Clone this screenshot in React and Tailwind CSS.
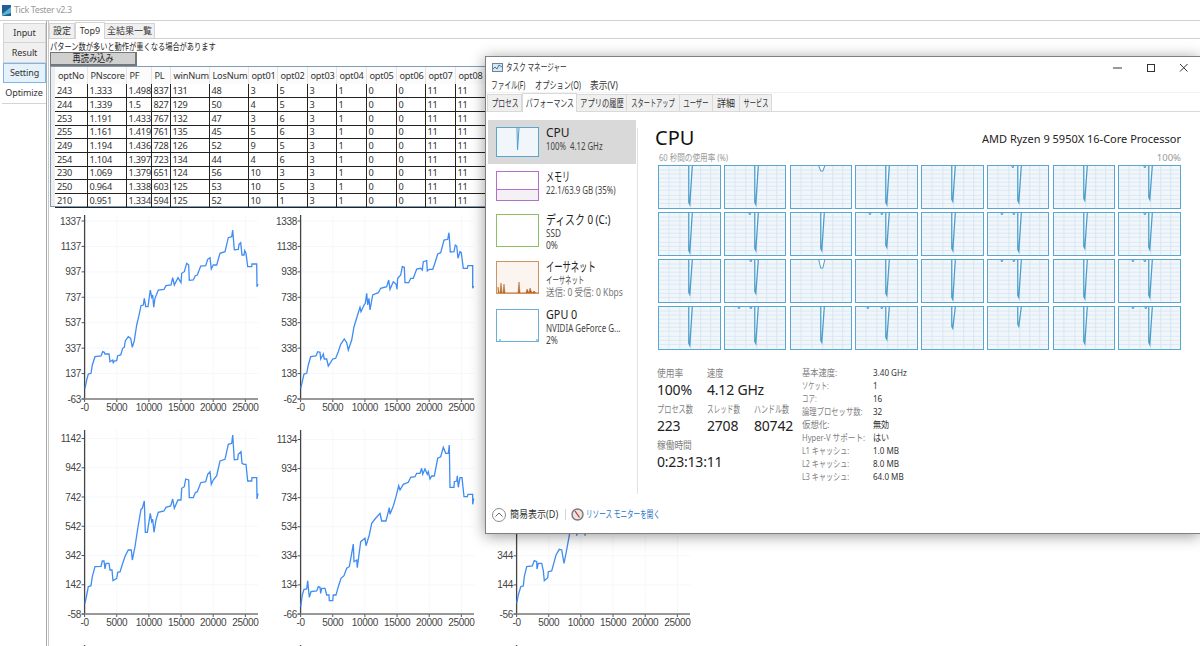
import React from 'react';

const tableHead = ['optNo', 'PNscore', 'PF', 'PL', 'winNum', 'LosNum', 'opt01', 'opt02', 'opt03', 'opt04', 'opt05', 'opt06', 'opt07', 'opt08'];
const tableRows = [
  [243, '1.333', '1.498', 837, 131, 48, 3, 5],
  [244, '1.339', '1.5', 827, 129, 50, 4, 5],
  [253, '1.191', '1.433', 767, 132, 47, 3, 6],
  [255, '1.161', '1.419', 761, 135, 45, 5, 6],
  [249, '1.194', '1.436', 728, 126, 52, 9, 5],
  [254, '1.104', '1.397', 723, 134, 44, 4, 6],
  [230, '1.069', '1.379', 651, 124, 56, 10, 3],
  [250, '0.964', '1.338', 603, 125, 53, 10, 5],
  [210, '0.951', '1.334', 594, 125, 52, 10, 1],
];

// 折れ線の座標は 3 倍の値で持っておいて描画時に割る
const line1 = [135,535,140,510,145,492,153,490,157,465,165,440,183,438,188,425,193,427,195,432,207,432,210,455,218,450,220,460,222,453,230,452,233,437,242,435,248,415,253,412,256,393,265,380,272,385,277,412,283,392,290,345,296,320,303,287,310,285,313,265,317,290,324,290,331,240,335,262,338,255,341,292,345,265,355,240,372,238,378,227,393,225,398,203,403,225,414,203,423,218,425,190,433,185,440,160,446,165,448,211,460,210,466,197,472,195,482,168,497,167,503,148,510,143,514,177,520,165,530,165,540,130,555,125,565,83,575,80,578,60,583,119,595,118,597,103,602,98,606,135,612,135,614,122,618,130,623,170,635,170,636,162,650,162,651,230,654,222];
const line2 = [92,535,97,515,102,492,110,490,115,465,122,440,138,438,143,425,150,427,152,447,160,432,163,447,170,447,175,468,180,460,188,447,197,445,205,425,212,403,223,387,230,398,235,420,245,390,252,350,262,318,270,292,273,305,282,285,286,280,290,250,293,285,297,265,300,300,308,255,325,248,332,235,350,230,356,210,360,238,370,215,378,222,381,238,383,205,392,195,397,170,403,172,405,218,416,218,422,205,430,205,440,177,452,175,457,180,460,155,470,152,472,183,478,178,488,178,493,165,503,132,512,128,522,90,533,88,537,68,541,126,552,125,556,105,560,108,564,145,570,125,574,128,580,175,592,175,594,167,608,167,608,235,611,228];
const line3 = [135,535,140,510,145,485,153,482,157,455,165,425,183,424,187,408,192,408,195,432,198,415,207,415,210,435,216,435,219,467,230,460,233,442,240,441,248,415,256,392,265,375,274,375,277,405,285,365,295,300,303,253,307,250,313,228,316,322,322,322,331,265,335,290,338,283,342,322,348,285,355,262,372,258,378,247,392,243,398,222,403,250,414,225,423,225,425,190,433,185,437,162,446,165,448,218,460,218,466,203,472,200,482,173,497,170,503,148,510,140,514,178,520,165,530,152,540,108,555,103,565,58,575,55,578,30,583,104,593,103,595,88,603,80,606,115,612,118,618,118,623,168,635,168,636,158,650,158,651,222,654,205];
const line4 = [92,545,97,510,102,493,110,492,113,467,118,517,123,500,140,498,145,485,150,487,152,505,155,490,165,490,170,510,177,510,178,527,188,527,190,510,198,510,205,485,213,460,222,452,230,430,238,425,245,385,250,357,252,410,260,405,262,428,272,350,285,340,288,362,298,330,305,295,315,282,330,265,335,288,348,288,358,248,360,268,370,243,378,215,386,182,390,195,400,178,415,172,422,157,435,155,440,145,450,145,455,130,458,148,465,132,472,148,475,140,480,162,485,153,493,153,503,100,512,95,520,67,527,85,535,85,538,60,540,187,552,187,553,170,560,168,562,152,565,187,570,158,576,158,582,215,592,215,594,208,608,208,608,238,611,220];
const line5 = [740,535,745,510,752,485,760,483,763,455,770,425,787,423,793,407,800,410,801,432,805,415,815,415,820,437,823,467,833,458,835,440,845,438,858,390,868,373,875,375,882,415,888,385,900,320,905,290,920,290,920,332,925,290,945,290,945,332,950,290];

const toPoints = (raw, dx) => {
  const out = [];
  for (let i = 0; i < raw.length; i += 2) {
    out.push(`${(raw[i] / 3 + dx).toFixed(1)},${(raw[i + 1] / 3).toFixed(1)}`);
  }
  return out.join(' ');
};

const AXIS_X = 44.6;
const X_STEP = 32.15;

// 元画面のかなは幅が狭いので横方向だけ縮める
const K = ({ s = 'scale-x-[0.8]', center, children }) => (
  <span className={`inline-block whitespace-nowrap ${center ? 'origin-center' : 'origin-left'} ${s}`}>{children}</span>
);

const Chart = ({ labels = [], top = 11, bottom = 189, axisTop = 5, points }) => {
  const stepY = labels.length > 1 ? (bottom - top) / (labels.length - 1) : 0;
  const xTicks = ['-0', '5000', '10000', '15000', '20000', '25000'];
  return (
    <svg width="216" height="215" className="overflow-visible font-['Liberation_Sans',sans-serif] text-[10px]">
      {labels.map((t, i) => {
        const y = top + stepY * i;
        return (
          <g key={t}>
            {i < labels.length - 1 && <line x1={AXIS_X} x2="218" y1={y} y2={y} className="stroke-[#f5f7fc]" />}
            <line x1={AXIS_X - 3} x2={AXIS_X} y1={y} y2={y} className="stroke-[#555]" />
            <text x={AXIS_X - 3.5} y={y + 3.5} textAnchor="end" letterSpacing="-0.3" className="fill-[#444]">{t}</text>
          </g>
        );
      })}
      {xTicks.map((t, i) => {
        const x = AXIS_X + X_STEP * i;
        return (
          <g key={t}>
            {labels.length > 0 && i > 0 && <line x1={x} x2={x} y1={axisTop} y2={bottom} className="stroke-[#f5f7fc]" />}
            {labels.length > 0 && <line x1={x} x2={x} y1={bottom} y2={bottom + 3} className="stroke-[#555]" />}
            {labels.length > 0 && <text x={x} y={bottom + 12} textAnchor="middle" letterSpacing="-0.3" className="fill-[#444]">{t}</text>}
          </g>
        );
      })}
      <line x1={AXIS_X} x2={AXIS_X} y1={axisTop} y2={labels.length ? bottom : 215} className="stroke-[#444] stroke-[1.3]" />
      {labels.length > 0 && <line x1={AXIS_X - 3} x2="218" y1={bottom} y2={bottom} className="stroke-[#777] stroke-[1.5]" />}
      {points && <polyline points={points} fill="none" className="stroke-[#3f8cf3] stroke-[1.3]" />}
    </svg>
  );
};

const coreDepth = [
  [38, 38, 5, 38, 35, 36, 34, 33],
  [39, 37, 37, 34, 37, 38, 35, 36],
  [34, 33, 8, 35, 39, 37, 38, 37],
  [38, 36, 35, 32, 21, 19, 36, 37],
];
const coreDots = {
  '0-5': [25], '0-7': [26],
  '1-1': [25], '1-3': [14, 26], '1-5': [14, 26], '1-7': [26],
  '2-1': [26], '2-5': [14, 26], '2-7': [14, 26],
  '3-1': [14, 26], '3-3': [12, 26], '3-7': [14, 27],
};

const CoreCell = ({ depth, dots = [] }) => (
  <div className="h-[43.5px] border border-[#5aa6d1] bg-[#f1f6fa]">
    <svg width="100%" height="100%" viewBox="0 0 61 41" preserveAspectRatio="none" className="block">
      {[4, 8, 12, 16, 20, 24, 29, 33, 37].map((y) => (
        <line key={y} x1="0" x2="61" y1={y} y2={y} className="stroke-[#d9e8f3] stroke-[0.9]" />
      ))}
      {[10, 21, 32, 42, 52].map((x) => (
        <line key={x} x1={x} x2={x} y1="0" y2="41" className="stroke-[#d6e6f1] stroke-[0.9]" />
      ))}
      {depth > 10 ? (
        <polyline points={`30,0 30,${depth - 2} 31,${depth} 33.5,0`} className="fill-white stroke-[#4a9ccb] stroke-[1.3]" />
      ) : (
        <polyline points={`28,0 30,${depth} 32,${depth} 34,0`} className="fill-white stroke-[#4a9ccb] stroke-[1]" />
      )}
      {dots.map((x) => (
        <path key={x} d={`M${x - 1} 0 Q${x} 3 ${x + 1} 0`} fill="none" className="stroke-[#4a9ccb] stroke-[1]" />
      ))}
    </svg>
  </div>
);

const Thumb = ({ border, bg, className, children }) => (
  <div className={`h-full w-full border ${border} ${bg} ${className || ''}`}>{children}</div>
);

const SideItem = ({ thumb, title, titleScale, lines, selected, height, top, thumbH }) => (
  <div className={`flex ${height} ${top} ${selected ? 'bg-[#d9d9d9]' : ''} pl-2`}>
    <div className={`w-[43px] shrink-0 ${thumbH}`}>{thumb}</div>
    <div className="-mt-[3px] ml-[7px]">
      <div className="text-[13px] leading-[16px] text-[#222]"><K s={titleScale}>{title}</K></div>
      {lines.map((l) => (
        <div key={l.text + (l.gray ? 'g' : '')} className={`text-[10px] leading-[12px] ${l.gray ? 'text-[#777]' : 'text-[#444]'}`}>
          <K s={l.s}>{l.text}</K>
        </div>
      ))}
    </div>
  </div>
);

const specs = [
  ['基本速度:', 'scale-x-[0.87]', '3.40 GHz'],
  ['ソケット:', 'scale-x-[0.66]', '1'],
  ['コア:', 'scale-x-[0.68]', '16'],
  ['論理プロセッサ数:', 'scale-x-[0.77]', '32'],
  ['仮想化:', 'scale-x-[0.89]', '無効'],
  ['Hyper-V サポート:', 'scale-x-[0.8]', 'はい'],
  ['L1 キャッシュ:', 'scale-x-[0.75]', '1.0 MB'],
  ['L2 キャッシュ:', 'scale-x-[0.75]', '8.0 MB'],
  ['L3 キャッシュ:', 'scale-x-[0.75]', '64.0 MB'],
];

const TaskManager = () => (
  <div className="absolute left-[485px] top-[56px] flex h-[478px] w-[715px] flex-col border-l border-t border-b border-[#808080] bg-white shadow-[0_2px_14px_rgba(0,0,0,0.4)]">
    {/* タイトル */}
    <div className="flex h-[21px] shrink-0 items-center pl-[6px]">
      <svg width="11" height="11" viewBox="0 0 11 11" className="mr-[3px]">
        <rect x="0.5" y="1.5" width="10" height="8" className="fill-[#dbe7ef] stroke-[#6d8596]" />
        <polyline points="1,7 3,5 5,7 7,3 10,5" fill="none" className="stroke-[#2f7fb5]" />
      </svg>
      <span className="text-[10px] text-[#333]"><K s="scale-x-[0.66]">タスク マネージャー</K></span>
      <div className="ml-auto flex items-center">
        <svg width="100" height="14" viewBox="0 0 100 14" className="mr-[2px]">
          <line x1="15" x2="24" y1="7" y2="7" className="stroke-[#333]" />
          <rect x="49.5" y="3.5" width="7" height="7" fill="none" className="stroke-[#333]" />
          <path d="M82 3l7.5 7.5M89.5 3L82 10.5" fill="none" className="stroke-[#333]" />
        </svg>
      </div>
    </div>
    <div className="flex h-[14px] shrink-0 items-center pl-[5px] text-[10px] text-[#333]">
      <span className="w-[44px]"><K s="scale-x-[0.67]">ファイル(F)</K></span>
      <span className="w-[55px]"><K s="scale-x-[0.72]">オプション(O)</K></span>
      <span><K s="scale-x-[0.87]">表示(V)</K></span>
    </div>
    <div className="h-[1px] shrink-0 bg-[#f2f2f2]" />
    <div className="flex h-[19px] shrink-0 items-end border-b border-[#d9d9d9] pl-[1px] text-[10px] text-[#333]">
      <div className="flex h-[17px] w-[35px] items-center justify-center border border-b-0 border-[#d9d9d9] bg-[#f0f0f0]"><K center s="scale-x-[0.68]">プロセス</K></div>
      <div className="-mb-px flex h-[19px] w-[55px] items-center justify-center border border-b-0 border-[#d9d9d9] bg-white"><K center s="scale-x-[0.69]">パフォーマンス</K></div>
      <div className="flex h-[17px] w-[50px] items-center justify-center border border-b-0 border-l-0 border-[#d9d9d9] bg-[#f0f0f0]"><K center s="scale-x-[0.73]">アプリの履歴</K></div>
      <div className="flex h-[17px] w-[53px] items-center justify-center border border-b-0 border-l-0 border-[#d9d9d9] bg-[#f0f0f0]"><K center s="scale-x-[0.62]">スタートアップ</K></div>
      <div className="flex h-[17px] w-[33px] items-center justify-center border border-b-0 border-l-0 border-[#d9d9d9] bg-[#f0f0f0]"><K center s="scale-x-[0.63]">ユーザー</K></div>
      <div className="flex h-[17px] w-[27px] items-center justify-center border border-b-0 border-l-0 border-[#d9d9d9] bg-[#f0f0f0]"><K center s="scale-x-[0.9]">詳細</K></div>
      <div className="flex h-[17px] w-[32px] items-center justify-center border border-b-0 border-l-0 border-[#d9d9d9] bg-[#f0f0f0]"><K center s="scale-x-[0.62]">サービス</K></div>
    </div>

    <div className="flex min-h-0 flex-1">
      {/* 左のリスト */}
      <div className="w-[150px] shrink-0 pl-[2px] pt-[8px]">
        <SideItem
          selected height="h-[44px]" top="pt-[7px]" thumbH="h-[30px]" title="CPU" titleScale="scale-x-[0.92]"
          lines={[{ text: '100%\u00a0\u00a04.12 GHz', s: 'scale-x-[0.78]' }]}
          thumb={
            <Thumb border="border-[#5aa6d1]" bg="bg-[#f1f6fa]">
              <svg width="41" height="28" className="block">
                <polyline points="20,0 20.5,22 22,0" className="fill-white stroke-[#4a9ccb]" />
              </svg>
            </Thumb>
          }
        />
        <SideItem
          height="h-[44px]" top="pt-[7px]" thumbH="h-[30px]" title="メモリ" titleScale="scale-x-[0.62]"
          lines={[{ text: '22.1/63.9 GB (35%)', s: 'scale-x-[0.79]' }]}
          thumb={
            <Thumb border="border-[#b56fcb]" bg="bg-white" className="flex flex-col">
              <div className="h-[18px] border-b border-[#b56fcb]" />
              <div className="flex-1 bg-[#f3f1f4]" />
            </Thumb>
          }
        />
        <SideItem
          height="h-[47px]" top="pt-[6px]" thumbH="h-[33px]" title="ディスク 0 (C:)" titleScale="scale-x-[0.76]"
          lines={[{ text: 'SSD', s: 'scale-x-[0.82]' }, { text: '0%', s: 'scale-x-[0.85]' }]}
          thumb={<Thumb border="border-[#8dc065]" bg="bg-white" />}
        />
        <SideItem
          height="h-[47px]" top="pt-[6px]" thumbH="h-[33px]" title="イーサネット" titleScale="scale-x-[0.64]"
          lines={[{ text: 'イーサネット', s: 'scale-x-[0.64]' }, { text: '送信: 0 受信: 0 Kbps', gray: true, s: 'scale-x-[0.85]' }]}
          thumb={
            <Thumb border="border-[#cd9463]" bg="bg-[#fcf5ef]">
              <svg width="41" height="31" className="block">
                <path d="M1 31V25L2 31H3L4 21L5 31H6L7 22L8 31H21L22 20L23 31H29L30 27L32 31L33 26L35 31L37 29L39 31H41Z" className="fill-[#b4611f] stroke-[#b4611f] stroke-[0.5]" />
              </svg>
            </Thumb>
          }
        />
        <SideItem
          height="h-[48px]" top="pt-[7px]" thumbH="h-[33px]" title="GPU 0" titleScale="scale-x-[0.83]"
          lines={[{ text: 'NVIDIA GeForce G...', s: 'scale-x-[0.8]' }, { text: '2%', s: 'scale-x-[0.85]' }]}
          thumb={
            <Thumb border="border-[#6bb0d8]" bg="bg-white">
              <svg width="41" height="31" className="block">
                <path d="M2 30h2M39 30h2" className="stroke-[#4a9ccb]" />
              </svg>
            </Thumb>
          }
        />
      </div>
      <div className="mb-[2px] ml-[1px] mt-[16px] w-px shrink-0 bg-[#e2e2e2]" />

      {/* 右のCPU */}
      <div className="min-w-0 flex-1 pl-[17px] pr-[19px] pt-[14px]">
        <div className="flex h-[24px] items-center justify-between">
          <span className="text-[20px] leading-[24px] text-[#111]">CPU</span>
          <span className="mt-[3px] text-[11px] text-[#222]">AMD Ryzen 9 5950X 16-Core Processor</span>
        </div>
        <div className="mt-[2px] flex h-[12px] items-center justify-between pl-[4px] text-[9.5px] text-[#999]">
          <K s="scale-x-[0.8]">60 秒間の使用率 (%)</K>
          <span>100%</span>
        </div>
        <div className="ml-[3px] mt-[1px] grid grid-cols-8 gap-x-[3.2px] gap-y-[3.6px]">
          {coreDepth.map((row, r) =>
            row.map((d, c) => <CoreCell key={`${r}-${c}`} depth={d} dots={coreDots[`${r}-${c}`]} />),
          )}
        </div>
        <div className="ml-[2px] mt-[17px] flex">
          <div className="w-[145px] shrink-0">
            <div className="grid grid-cols-[50px_47px_48px] text-[#808080]">
              <span className="text-[10px] leading-[12px]"><K s="scale-x-[0.87]">使用率</K></span>
              <span className="col-span-2 text-[10px] leading-[12px]"><K s="scale-x-[0.82]">速度</K></span>
              <span className="h-[24px] text-[14px] leading-[22px] tracking-[-0.2px] text-[#222]">100%</span>
              <span className="col-span-2 text-[14px] leading-[22px] tracking-[-0.2px] text-[#222]">4.12 GHz</span>
              <span className="text-[10px] leading-[12px]"><K s="scale-x-[0.72]">プロセス数</K></span>
              <span className="text-[10px] leading-[12px]"><K s="scale-x-[0.66]">スレッド数</K></span>
              <span className="text-[10px] leading-[12px]"><K s="scale-x-[0.7]">ハンドル数</K></span>
              <span className="h-[24px] text-[14px] leading-[22px] tracking-[-0.2px] text-[#222]">223</span>
              <span className="text-[14px] leading-[22px] tracking-[-0.2px] text-[#222]">2708</span>
              <span className="text-[14px] leading-[22px] tracking-[-0.2px] text-[#222]">80742</span>
              <span className="col-span-3 text-[10px] leading-[12px]"><K s="scale-x-[0.87]">稼働時間</K></span>
              <span className="col-span-3 text-[14px] leading-[22px] tracking-[-0.2px] text-[#222]">0:23:13:11</span>
            </div>
          </div>
          <div className="grid auto-rows-[13px] grid-cols-[71px_60px] items-center text-[9.5px]">
            {specs.map(([k, s, v]) => (
              <React.Fragment key={k}>
                <span className="text-[#808080]"><K s={s}>{k}</K></span>
                <span className="text-[#333]"><K s="scale-x-[0.85]">{v}</K></span>
              </React.Fragment>
            ))}
          </div>
        </div>
      </div>
    </div>

    {/* フッター */}
    <div className="flex h-[37px] shrink-0 items-center pl-[6px]">
      <svg width="14" height="14" viewBox="0 0 14 14">
        <circle cx="7" cy="7" r="6.5" fill="none" className="stroke-[#8a8a8a]" />
        <polyline points="3.5,8.5 7,5 10.5,8.5" fill="none" className="stroke-[#666]" />
      </svg>
      <span className="ml-[4px] w-[49px] text-[10.5px] text-[#333]"><K s="scale-x-[0.86]">簡易表示(D)</K></span>
      <div className="ml-[6px] h-[11px] w-px bg-[#d5d5d5]" />
      <svg width="13" height="13" viewBox="0 0 13 13" className="ml-[5px]">
        <circle cx="6.5" cy="6.5" r="5.5" className="fill-[#e8e4df] stroke-[#777] stroke-[1.4]" />
        <line x1="4" y1="3" x2="8.5" y2="9.5" className="stroke-[#c8342c] stroke-[1.3]" />
      </svg>
      <span className="ml-[2px] text-[10px] text-[#1f74cc]"><K s="scale-x-[0.66]">リソース モニターを開く</K></span>
    </div>
  </div>
);

const App = () => {
  return (
    <div className="relative h-[646px] w-[1200px] overflow-hidden bg-white font-['Noto_Sans','Noto_Sans_CJK_JP',sans-serif]">
      {/* タイトルバー */}
      <div className="flex h-[20px] items-center pl-[2px]">
        <svg width="9" height="11" viewBox="0 0 9 11">
          <rect width="9" height="11" className="fill-[#1f5f9e]" />
          <path d="M0 9L4 6L9 2V8L0 11Z" className="fill-[#5fb4c8]" />
        </svg>
        <span className="ml-[3px] text-[9px] tracking-[-0.4px] text-[#9a9a9a]">Tick Tester v2.3</span>
      </div>

      <div className="flex h-[626px] border-t border-[#d0d0d0]">
        {/* 左のタブ */}
        <div className="w-[47px] shrink-0 border-r border-[#a9a9a9] pl-[3px] pt-[2px] text-[9px] tracking-[-0.1px] text-[#333]">
          <div className="flex h-[20px] items-center justify-center border border-[#d4d4d4] bg-[#f0f0f0]">Input</div>
          <div className="flex h-[20px] items-center justify-center border border-t-0 border-[#d4d4d4] bg-[#f0f0f0]">Result</div>
          <div className="flex h-[20px] items-center justify-center border border-[#7eb4ea] bg-[#e5f1fb]">Setting</div>
          <div className="-ml-[1px] flex h-[21px] items-center justify-center border-b border-[#d4d4d4] bg-white">Optimize</div>
        </div>

        <div className="ml-[1px] min-w-0 flex-1 border-l border-[#c9c9c9]">
          {/* 内側のタブ */}
          <div className="flex h-[18px] items-end border-b border-[#d0d0d0] text-[9px] text-[#333]">
            <div className="flex h-[15px] w-[26px] items-center justify-center border border-b-0 border-[#d4d4d4] bg-[#f0f0f0]">設定</div>
            <div className="-mb-px flex h-[17px] w-[30px] items-center justify-center border border-b-0 border-[#d4d4d4] bg-white">Top9</div>
            <div className="flex h-[15px] w-[50px] items-center justify-center border border-b-0 border-l-0 border-[#d4d4d4] bg-[#f0f0f0] whitespace-nowrap">全結果一覧</div>
          </div>
          <div className="h-[13px] pl-[1px] text-[9.5px] leading-[15px] text-[#222]"><K s="scale-x-[0.76]">パターン数が多いと動作が重くなる場合があります</K></div>
          <button className="ml-[1px] flex h-[14px] w-[87px] items-center justify-center border-b-2 border-l border-r-2 border-t border-[#777] bg-[#d0d0d0] text-[10px] text-[#222]"><K center s="scale-x-[0.82]">再読み込み</K></button>

          {/* 結果テーブル */}
          <div className="ml-[1px] flex h-[141px] w-[436px] border border-[#7f9db9] text-[9.2px] tracking-[-0.2px] text-[#333]">
            <div className="w-[4px] shrink-0 bg-[#eeeeee]" />
            <table className="w-[430px] table-fixed border-collapse">
              <colgroup>
                <col className="w-[32px]" /><col className="w-[39px]" /><col className="w-[25px]" /><col className="w-[19px]" />
                <col className="w-[39px]" /><col className="w-[39px]" /><col className="w-[29px]" /><col className="w-[30px]" />
                <col className="w-[29px]" /><col className="w-[30px]" /><col className="w-[30px]" /><col className="w-[29px]" />
                <col className="w-[30px]" /><col className="w-[30px]" />
              </colgroup>
              <thead>
                <tr className="h-[17px] bg-[#fbfbfb]">
                  {tableHead.map((h) => (
                    <th key={h} className="border-r border-[#e5e5e5] pl-[3px] text-left font-normal">{h}</th>
                  ))}
                </tr>
              </thead>
              <tbody>
                {tableRows.map((row) => (
                  <tr key={row[0]} className="h-[13.7px] leading-none">
                    {[...row, 3, 1, 0, 0, 11, 11].map((v, i) => (
                      <td key={i} className="overflow-hidden whitespace-nowrap border-b border-r border-[#222] pl-[2px]">{v}</td>
                    ))}
                  </tr>
                ))}
              </tbody>
            </table>
          </div>

          {/* グラフ */}
          <div className="-ml-[9px] mt-[3px] grid grid-cols-[216px_216px_216px] auto-rows-[215px]">
            <Chart labels={['1337', '1137', '937', '737', '537', '337', '137', '-63']} points={toPoints(line1, 0)} />
            <Chart labels={['1338', '1138', '938', '738', '538', '338', '138', '-62']} points={toPoints(line2, 14)} />
            <div />
            <Chart top={13.5} labels={['1142', '942', '742', '542', '342', '142', '-58']} points={toPoints(line3, 0)} />
            <Chart top={14.5} labels={['1134', '934', '734', '534', '334', '134', '-66']} points={toPoints(line4, 14)} />
            <Chart top={14.5} labels={['1144', '944', '744', '544', '344', '144', '-56']} points={toPoints(line5, -202)} />
            <Chart />
            <Chart />
            <Chart />
          </div>
        </div>
      </div>

      <TaskManager />
    </div>
  );
};

export default App;
